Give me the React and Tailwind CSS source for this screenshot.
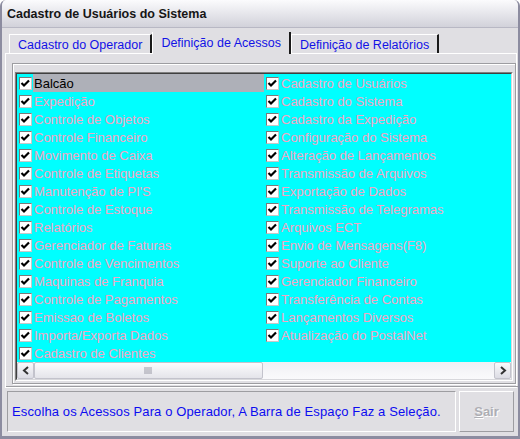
const colA = [
  "Balcão",
  "Expedição",
  "Controle de Objetos",
  "Controle Financeiro",
  "Movimento de Caixa",
  "Controle de Etiquetas",
  "Manutenção de PI'S",
  "Controle de Estoque",
  "Relatórios",
  "Gerenciador de Faturas",
  "Controle de Vencimentos",
  "Maquinas de Franquia",
  "Controle de Pagamentos",
  "Emissao de Boletos",
  "Importa/Exporta Dados",
  "Cadastro de Clientes",
];

const colB = [
  "Cadastro de Usuários",
  "Cadastro do Sistema",
  "Cadastro da Expedição",
  "Configuração do Sistema",
  "Alteração de Lançamentos",
  "Transmissão de Arquivos",
  "Exportação de Dados",
  "Transmissão de Telegramas",
  "Arquivos ECT",
  "Envio de Mensagens(F8)",
  "Suporte ao Cliente",
  "Gerenciador Financeiro",
  "Transferência de Contas",
  "Lançamentos Diversos",
  "Atualização do PostalNet",
];

const CheckBox = () => (
  <span className="w-[13px] h-[13px] shrink-0 bg-white border border-[#7a7a7a] border-r-[#c8c8c8] border-b-[#c8c8c8] flex items-center justify-center">
    <svg width="11" height="11" viewBox="0 0 11 11">
      <path d="M1.5 5 L4 7.5 L9 2.5" fill="none" stroke="#000" strokeWidth="2.2" />
    </svg>
  </span>
);

const Item = ({ label, selected }) => (
  <div className="h-[18px] flex items-center pl-[2px]">
    <CheckBox />
    <span
      className={
        selected
          ? "ml-[1px] pl-[1px] h-[18px] flex-1 flex items-center bg-[#aeb0b8] text-black"
          : "ml-[1px] pl-[1px] flex-1 text-[#f4a6c4]"
      }
    >
      {label}
    </span>
  </div>
);

const Tab = ({ label, active, first }) => (
  <div
    className={
      active
        ? "h-[22px] -mb-[1px] px-[8px] flex items-start pt-[5px] bg-[#e0dfe3] border-l border-white border-r-2 border-r-[#1a1a1a] text-[#1212e6] z-10"
        : "h-[19px] mt-[2px] px-[8px] flex items-start pt-[4px] border-t border-l border-white border-r-2 border-r-[#1a1a1a] text-[#1212e6]" +
          (first ? " ml-[4px]" : "")
    }
  >
    {label}
  </div>
);

export default function App() {
  return (
    <div
      className="w-[520px] h-[439px] bg-[#e0dfe3] border-x-2 border-b-[3px] border-[#8c8ca0] flex flex-col rounded-t-[6px] overflow-hidden"
      style={{ fontFamily: '"Liberation Sans", Arial, sans-serif' }}
    >
      <div className="h-[28px] shrink-0 bg-gradient-to-b from-[#fbfbfd] to-[#d2d2da] border-b border-[#b8b8c4] flex items-center pl-[5px] pt-[2px] text-[12.5px] font-bold text-[#161616]">
        Cadastro de Usuários do Sistema
      </div>

      <div className="flex-1 flex flex-col pl-[3px] pr-[1px] pt-[4px]">
        <div className="flex items-end text-[12.5px] leading-none">
          <Tab label="Cadastro do Operador" first />
          <Tab label="Definição de Acessos" active />
          <Tab label="Definição de Relatórios" />
        </div>

        <div className="border-t border-l border-white border-r border-b border-[#101010] border-t-white border-l-white flex">
          <div className="flex-1 border-r border-b border-[#9d9da1] pl-[6px] pr-[3px] pt-[9px] pb-[2px] flex">
            <div className="flex-1 border border-[#9d9da1] shadow-[inset_1px_1px_0_#fff,1px_1px_0_#fff] pl-[2px] pr-[2px] pt-[8px] pb-[2px] flex">
              <div className="flex-1 border-t border-l border-[#808080] border-r border-b border-r-white border-b-white flex">
                <div className="flex-1 border-t border-l border-[#404040] border-r border-b border-r-[#d8d8dc] border-b-[#d8d8dc] flex flex-col">
                  <div className="h-[288px] bg-[#00ffff] text-[13px] leading-none">
                    <div className="grid grid-rows-[repeat(16,18px)] grid-flow-col auto-cols-[247px]">
                      {colA.map((l, i) => (
                        <Item key={l} label={l} selected={i === 0} />
                      ))}
                      {colB.map((l) => (
                        <Item key={l} label={l} />
                      ))}
                    </div>
                  </div>
                  <div className="h-[17px] flex bg-[#f3f3f6]">
                    <div className="w-[17px] border border-[#c3c3cc] rounded-[2px] bg-gradient-to-b from-[#fafafc] to-[#dcdce4] flex items-center justify-center">
                      <svg width="8" height="9" viewBox="0 0 8 9">
                        <path d="M6 1 L2 4.5 L6 8" fill="none" stroke="#333" strokeWidth="2" />
                      </svg>
                    </div>
                    <div className="w-[229px] border border-[#c3c3cc] rounded-[2px] bg-gradient-to-b from-[#fcfcfd] to-[#e4e4ea] flex items-center justify-center">
                      <svg width="9" height="7" viewBox="0 0 9 7">
                        <path d="M1 0v7M3 0v7M5 0v7M7 0v7" stroke="#9a9aa6" strokeWidth="1" />
                      </svg>
                    </div>
                    <div className="flex-1 bg-gradient-to-b from-[#f0f0f4] to-[#fafafc]" />
                    <div className="w-[17px] border border-[#c3c3cc] rounded-[2px] bg-gradient-to-b from-[#fafafc] to-[#dcdce4] flex items-center justify-center">
                      <svg width="8" height="9" viewBox="0 0 8 9">
                        <path d="M2 1 L6 4.5 L2 8" fill="none" stroke="#333" strokeWidth="2" />
                      </svg>
                    </div>
                  </div>
                </div>
              </div>
            </div>
          </div>
        </div>

        <div className="flex gap-[3px] pl-[2px] pr-[3px] pt-[3px]">
          <div className="w-[449px] h-[41px] border-t border-l border-[#9d9da1] border-r border-b border-r-white border-b-white flex items-center pl-[4px] text-[13px] tracking-[0.12px] text-[#0c0cf0]">
            Escolha os Acessos Para o Operador, A Barra de Espaço Faz a Seleção.
          </div>
          <div className="flex-1 h-[41px] border-t border-l border-white border-r border-b border-r-[#9d9da1] border-b-[#9d9da1] flex items-center justify-center text-[13px] font-bold text-[#aeaeb4] [text-shadow:1px_1px_0_#fff]">
            <span>
              <span className="underline">S</span>air
            </span>
          </div>
        </div>
      </div>
    </div>
  );
}
